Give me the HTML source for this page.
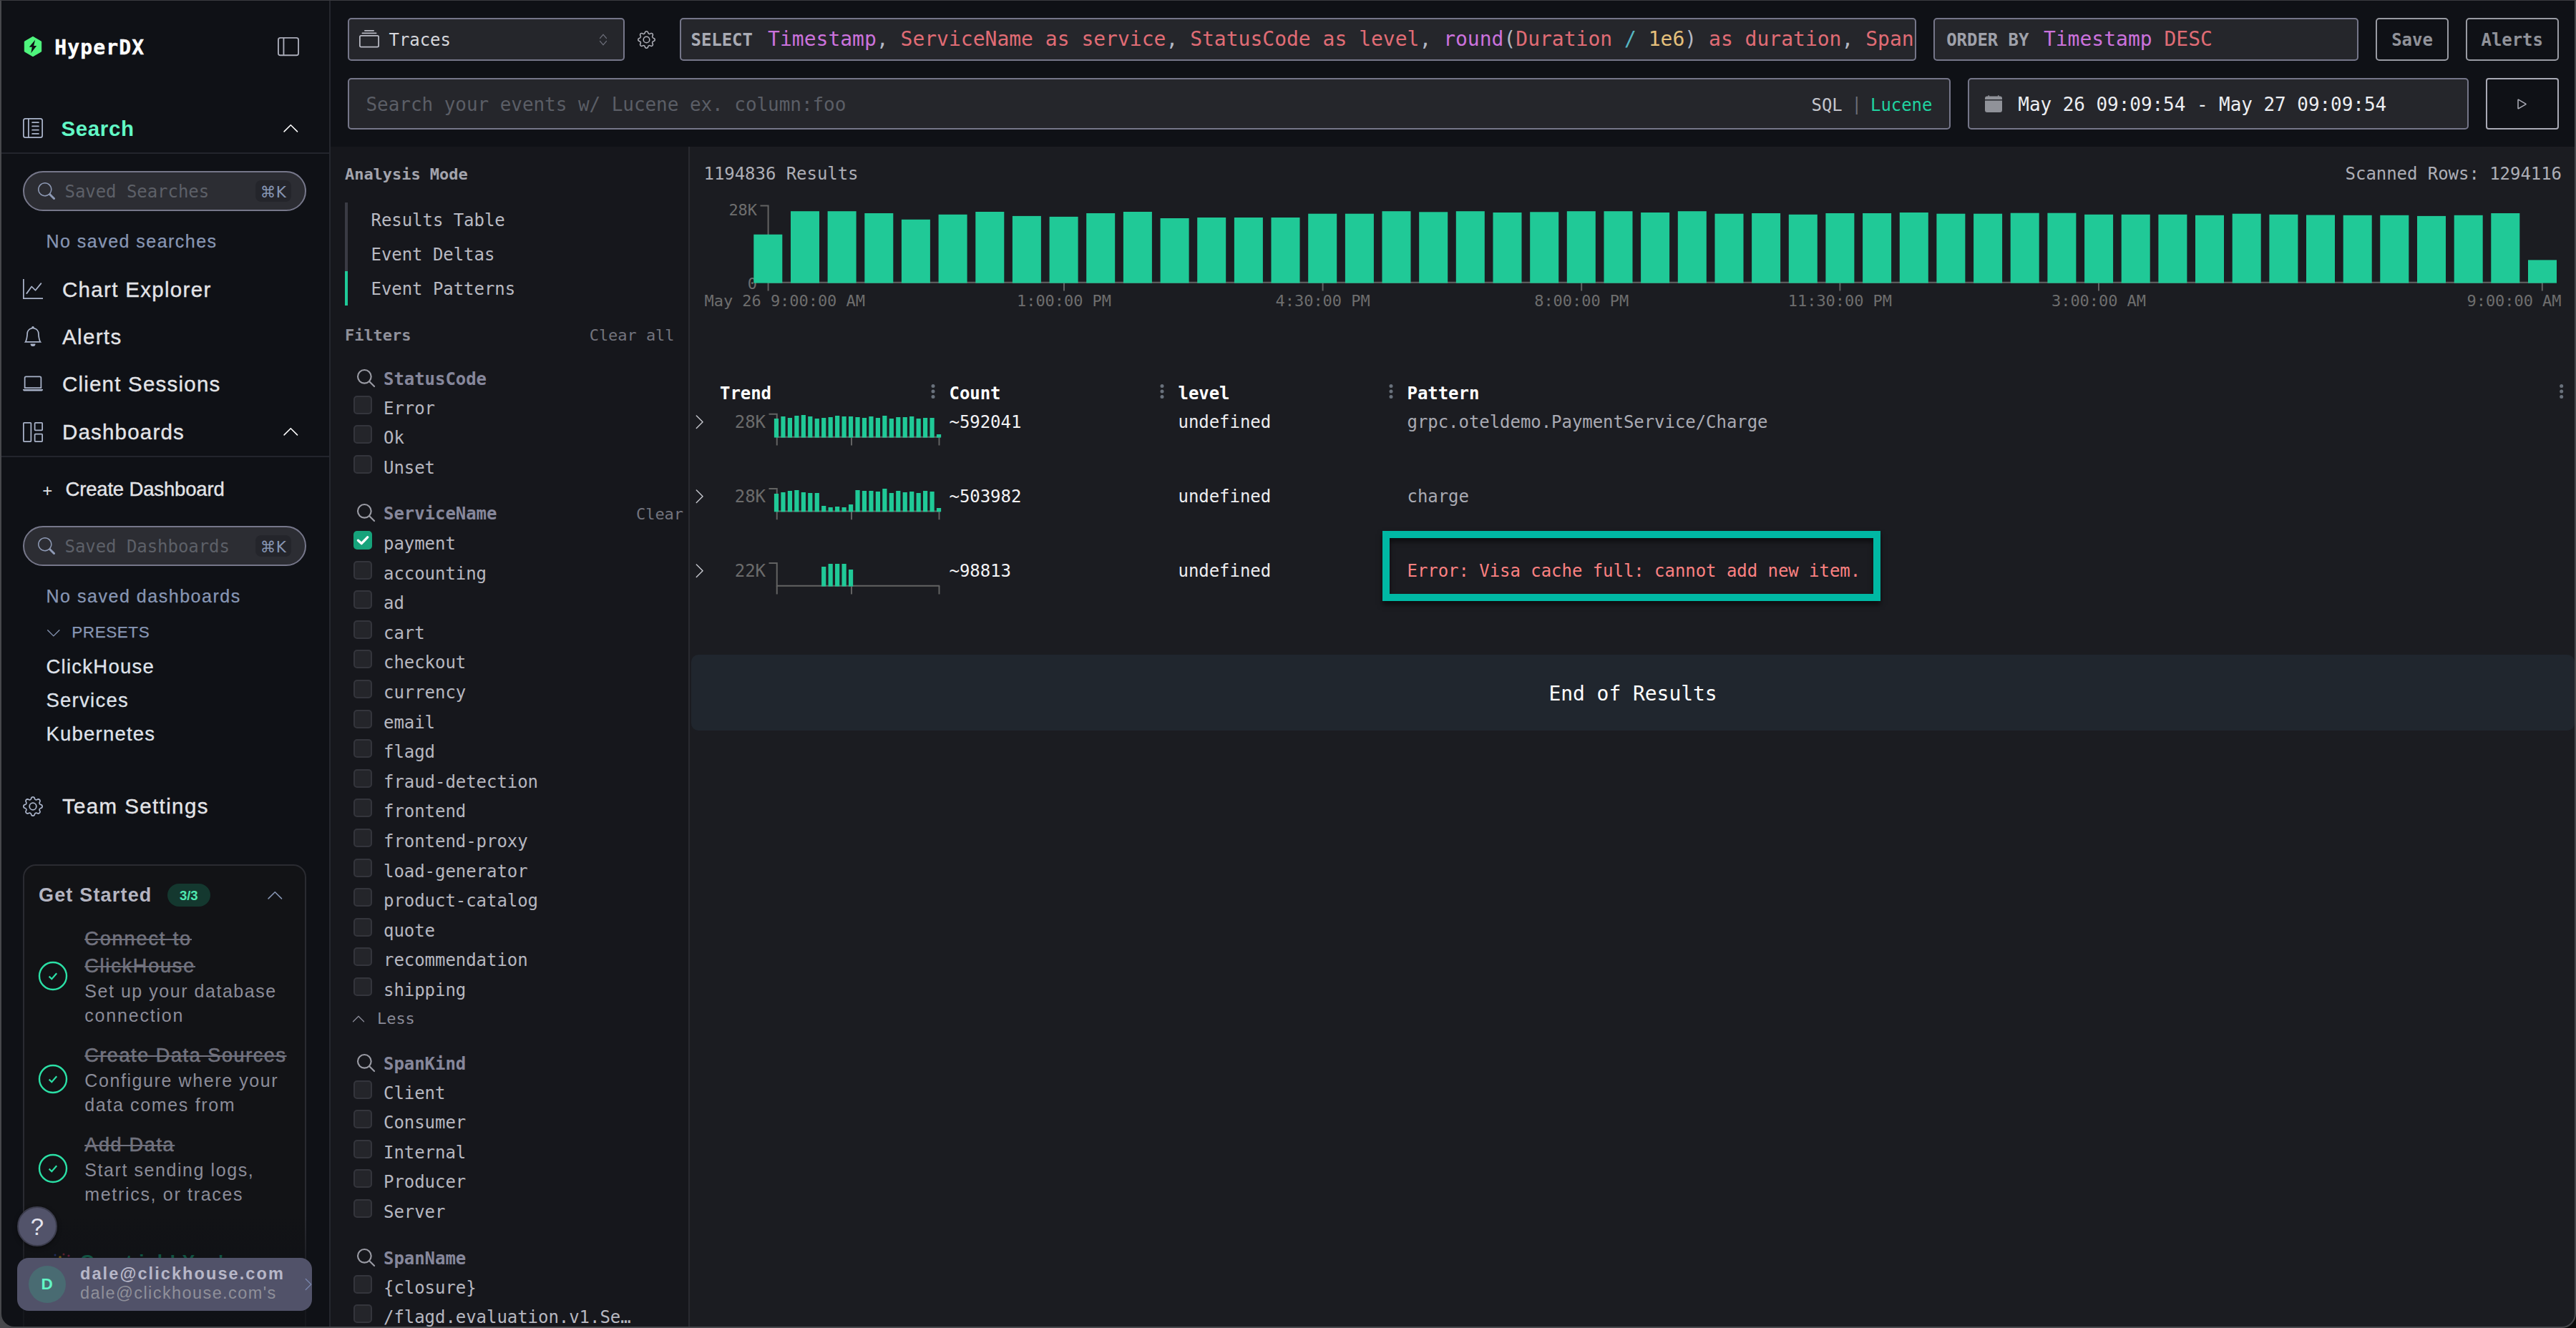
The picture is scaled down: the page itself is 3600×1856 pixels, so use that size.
<!DOCTYPE html>
<html lang="en"><head><meta charset="utf-8"><title>HyperDX - Search</title>
<style>
html,body{margin:0;padding:0;background:#1b1c21;}
body{width:3600px;height:1856px;position:relative;overflow:hidden;}
.t{position:absolute;white-space:pre;height:0;line-height:0;}
.m{font-family:'DejaVu Sans Mono','Liberation Mono',monospace;}
.s{font-family:'Liberation Sans','DejaVu Sans',sans-serif;}
.kw{color:#cb72dc}.id{color:#e06c75}.pu{color:#b3b8c4}.nu{color:#e5c07b}.op{color:#56b6c2}
</style></head>
<body>
<div style="position:absolute;left:964.00px;top:204.50px;width:2636.00px;height:1651.50px;box-sizing:border-box;background:#1b1c21;"></div>
<div class="t m" style="top:243.00px;font-size:24px;color:#adaeb6;letter-spacing:-0.049px;left:983.50px;">1194836 Results</div>
<div class="t m" style="top:243.00px;font-size:24px;color:#adaeb6;letter-spacing:-0.049px;right:20.00px;">Scanned Rows: 1294116</div>
<div class="t m" style="top:293.50px;font-size:22px;color:#6e6e6e;letter-spacing:-0.045px;right:2542.00px;">28K</div>
<div class="t m" style="top:396.50px;font-size:22px;color:#6e6e6e;letter-spacing:-0.045px;right:2542.00px;">0</div>
<svg style="position:absolute;left:0;top:0" width="3600" height="1856" viewBox="0 0 3600 1856"><path d="M1062.5 287.5 H1073.6 V394.8 H3553.500" fill="none" stroke="#636363" stroke-width="2"/><path d="M1073.6 394.8 V406.500" stroke="#636363" stroke-width="2"/><path d="M1487 394.8 V406.500" stroke="#636363" stroke-width="2"/><path d="M1848.6 394.8 V406.500" stroke="#636363" stroke-width="2"/><path d="M2210.2 394.8 V406.500" stroke="#636363" stroke-width="2"/><path d="M2571.4 394.8 V406.500" stroke="#636363" stroke-width="2"/><path d="M2933 394.8 V406.500" stroke="#636363" stroke-width="2"/><path d="M3552.8 394.8 V406.500" stroke="#636363" stroke-width="2"/><rect x="1053.3" y="327.7" width="40" height="67.9" fill="#20c997"/><rect x="1105.0" y="295.2" width="40" height="100.4" fill="#20c997"/><rect x="1156.6" y="295.2" width="40" height="100.4" fill="#20c997"/><rect x="1208.3" y="298.0" width="40" height="97.6" fill="#20c997"/><rect x="1259.9" y="306.8" width="40" height="88.8" fill="#20c997"/><rect x="1311.6" y="299.8" width="40" height="95.8" fill="#20c997"/><rect x="1363.3" y="296.0" width="40" height="99.6" fill="#20c997"/><rect x="1414.9" y="301.9" width="40" height="93.7" fill="#20c997"/><rect x="1466.6" y="302.9" width="40" height="92.7" fill="#20c997"/><rect x="1518.2" y="298.0" width="40" height="97.6" fill="#20c997"/><rect x="1569.9" y="296.0" width="40" height="99.6" fill="#20c997"/><rect x="1621.6" y="305.0" width="40" height="90.6" fill="#20c997"/><rect x="1673.2" y="304.0" width="40" height="91.6" fill="#20c997"/><rect x="1724.9" y="304.0" width="40" height="91.6" fill="#20c997"/><rect x="1776.5" y="304.0" width="40" height="91.6" fill="#20c997"/><rect x="1828.2" y="298.7" width="40" height="96.9" fill="#20c997"/><rect x="1879.9" y="298.7" width="40" height="96.9" fill="#20c997"/><rect x="1931.5" y="295.2" width="40" height="100.4" fill="#20c997"/><rect x="1983.2" y="296.3" width="40" height="99.3" fill="#20c997"/><rect x="2034.8" y="295.2" width="40" height="100.4" fill="#20c997"/><rect x="2086.5" y="297.0" width="40" height="98.6" fill="#20c997"/><rect x="2138.2" y="296.3" width="40" height="99.3" fill="#20c997"/><rect x="2189.8" y="295.2" width="40" height="100.4" fill="#20c997"/><rect x="2241.5" y="295.2" width="40" height="100.4" fill="#20c997"/><rect x="2293.1" y="297.0" width="40" height="98.6" fill="#20c997"/><rect x="2344.8" y="295.2" width="40" height="100.4" fill="#20c997"/><rect x="2396.5" y="298.7" width="40" height="96.9" fill="#20c997"/><rect x="2448.1" y="298.0" width="40" height="97.6" fill="#20c997"/><rect x="2499.8" y="299.8" width="40" height="95.8" fill="#20c997"/><rect x="2551.4" y="298.0" width="40" height="97.6" fill="#20c997"/><rect x="2603.1" y="298.0" width="40" height="97.6" fill="#20c997"/><rect x="2654.8" y="297.0" width="40" height="98.6" fill="#20c997"/><rect x="2706.4" y="298.7" width="40" height="96.9" fill="#20c997"/><rect x="2758.1" y="298.7" width="40" height="96.9" fill="#20c997"/><rect x="2809.7" y="297.7" width="40" height="97.9" fill="#20c997"/><rect x="2861.4" y="297.7" width="40" height="97.9" fill="#20c997"/><rect x="2913.1" y="299.8" width="40" height="95.8" fill="#20c997"/><rect x="2964.7" y="299.8" width="40" height="95.8" fill="#20c997"/><rect x="3016.4" y="299.8" width="40" height="95.8" fill="#20c997"/><rect x="3068.0" y="300.8" width="40" height="94.8" fill="#20c997"/><rect x="3119.7" y="298.7" width="40" height="96.9" fill="#20c997"/><rect x="3171.4" y="299.8" width="40" height="95.8" fill="#20c997"/><rect x="3223.0" y="300.5" width="40" height="95.1" fill="#20c997"/><rect x="3274.7" y="300.8" width="40" height="94.8" fill="#20c997"/><rect x="3326.3" y="300.8" width="40" height="94.8" fill="#20c997"/><rect x="3378.0" y="301.9" width="40" height="93.7" fill="#20c997"/><rect x="3429.7" y="300.8" width="40" height="94.8" fill="#20c997"/><rect x="3481.3" y="298.0" width="40" height="97.6" fill="#20c997"/><rect x="3533.0" y="363.4" width="40" height="32.2" fill="#20c997"/><path d="M1074.5 578.75 H1085.75 V610.75 H1313.250" fill="none" stroke="#636363" stroke-width="2"/><path d="M1085.75 610.75 V622.5" stroke="#636363" stroke-width="2"/><path d="M1190 610.75 V622.5" stroke="#636363" stroke-width="2"/><path d="M1312.5 610.75 V622.5" stroke="#636363" stroke-width="2"/><rect x="1081.90" y="585.00" width="6.200" height="26.55" fill="#20c997"/><rect x="1091.36" y="582.00" width="6.200" height="29.55" fill="#20c997"/><rect x="1100.82" y="584.00" width="6.200" height="27.55" fill="#20c997"/><rect x="1110.28" y="581.00" width="6.200" height="30.55" fill="#20c997"/><rect x="1119.74" y="580.00" width="6.200" height="31.55" fill="#20c997"/><rect x="1129.20" y="582.00" width="6.200" height="29.55" fill="#20c997"/><rect x="1138.66" y="585.00" width="6.200" height="26.55" fill="#20c997"/><rect x="1148.12" y="584.00" width="6.200" height="27.55" fill="#20c997"/><rect x="1157.58" y="583.00" width="6.200" height="28.55" fill="#20c997"/><rect x="1167.04" y="581.00" width="6.200" height="30.55" fill="#20c997"/><rect x="1176.50" y="582.00" width="6.200" height="29.55" fill="#20c997"/><rect x="1185.96" y="582.00" width="6.200" height="29.55" fill="#20c997"/><rect x="1195.42" y="583.00" width="6.200" height="28.55" fill="#20c997"/><rect x="1204.88" y="584.00" width="6.200" height="27.55" fill="#20c997"/><rect x="1214.34" y="582.00" width="6.200" height="29.55" fill="#20c997"/><rect x="1223.80" y="584.00" width="6.200" height="27.55" fill="#20c997"/><rect x="1233.26" y="581.00" width="6.200" height="30.55" fill="#20c997"/><rect x="1242.72" y="585.00" width="6.200" height="26.55" fill="#20c997"/><rect x="1252.18" y="583.00" width="6.200" height="28.55" fill="#20c997"/><rect x="1261.64" y="583.00" width="6.200" height="28.55" fill="#20c997"/><rect x="1271.10" y="582.00" width="6.200" height="29.55" fill="#20c997"/><rect x="1280.56" y="585.00" width="6.200" height="26.55" fill="#20c997"/><rect x="1290.02" y="584.00" width="6.200" height="27.55" fill="#20c997"/><rect x="1299.48" y="584.00" width="6.200" height="27.55" fill="#20c997"/><rect x="1308.94" y="607.00" width="6.200" height="4.55" fill="#20c997"/><path d="M1074.5 683 H1085.75 V714.5 H1313.250" fill="none" stroke="#636363" stroke-width="2"/><path d="M1085.75 714.5 V726.25" stroke="#636363" stroke-width="2"/><path d="M1190 714.5 V726.25" stroke="#636363" stroke-width="2"/><path d="M1312.5 714.5 V726.25" stroke="#636363" stroke-width="2"/><rect x="1081.90" y="690.00" width="6.200" height="25.30" fill="#20c997"/><rect x="1091.36" y="688.00" width="6.200" height="27.30" fill="#20c997"/><rect x="1100.82" y="686.00" width="6.200" height="29.30" fill="#20c997"/><rect x="1110.28" y="685.00" width="6.200" height="30.30" fill="#20c997"/><rect x="1119.74" y="688.00" width="6.200" height="27.30" fill="#20c997"/><rect x="1129.20" y="689.00" width="6.200" height="26.30" fill="#20c997"/><rect x="1138.66" y="689.00" width="6.200" height="26.30" fill="#20c997"/><rect x="1148.12" y="707.00" width="6.200" height="8.30" fill="#20c997"/><rect x="1157.58" y="709.00" width="6.200" height="6.30" fill="#20c997"/><rect x="1167.04" y="708.00" width="6.200" height="7.30" fill="#20c997"/><rect x="1176.50" y="709.00" width="6.200" height="6.30" fill="#20c997"/><rect x="1185.96" y="705.00" width="6.200" height="10.30" fill="#20c997"/><rect x="1195.42" y="685.00" width="6.200" height="30.30" fill="#20c997"/><rect x="1204.88" y="686.00" width="6.200" height="29.30" fill="#20c997"/><rect x="1214.34" y="686.00" width="6.200" height="29.30" fill="#20c997"/><rect x="1223.80" y="687.00" width="6.200" height="28.30" fill="#20c997"/><rect x="1233.26" y="683.00" width="6.200" height="32.30" fill="#20c997"/><rect x="1242.72" y="689.00" width="6.200" height="26.30" fill="#20c997"/><rect x="1252.18" y="686.00" width="6.200" height="29.30" fill="#20c997"/><rect x="1261.64" y="688.00" width="6.200" height="27.30" fill="#20c997"/><rect x="1271.10" y="687.00" width="6.200" height="28.30" fill="#20c997"/><rect x="1280.56" y="689.00" width="6.200" height="26.30" fill="#20c997"/><rect x="1290.02" y="686.00" width="6.200" height="29.30" fill="#20c997"/><rect x="1299.48" y="687.00" width="6.200" height="28.30" fill="#20c997"/><rect x="1308.94" y="710.00" width="6.200" height="5.30" fill="#20c997"/><path d="M1074.5 787 H1085.75 V818.75 H1313.250" fill="none" stroke="#636363" stroke-width="2"/><path d="M1085.75 818.75 V830.5" stroke="#636363" stroke-width="2"/><path d="M1190 818.75 V830.5" stroke="#636363" stroke-width="2"/><path d="M1312.5 818.75 V830.5" stroke="#636363" stroke-width="2"/><rect x="1148.12" y="792.00" width="6.200" height="27.55" fill="#20c997"/><rect x="1157.58" y="788.00" width="6.200" height="31.55" fill="#20c997"/><rect x="1167.04" y="788.00" width="6.200" height="31.55" fill="#20c997"/><rect x="1176.50" y="788.00" width="6.200" height="31.55" fill="#20c997"/><rect x="1185.96" y="796.00" width="6.200" height="23.55" fill="#20c997"/><circle cx="1304" cy="539.5" r="2.500" fill="#69717c"/><circle cx="1304" cy="547" r="2.500" fill="#69717c"/><circle cx="1304" cy="554.5" r="2.500" fill="#69717c"/><circle cx="1624" cy="539.5" r="2.500" fill="#69717c"/><circle cx="1624" cy="547" r="2.500" fill="#69717c"/><circle cx="1624" cy="554.5" r="2.500" fill="#69717c"/><circle cx="1944" cy="539.5" r="2.500" fill="#69717c"/><circle cx="1944" cy="547" r="2.500" fill="#69717c"/><circle cx="1944" cy="554.5" r="2.500" fill="#69717c"/><circle cx="3579.7" cy="539.5" r="2.500" fill="#69717c"/><circle cx="3579.7" cy="547" r="2.500" fill="#69717c"/><circle cx="3579.7" cy="554.5" r="2.500" fill="#69717c"/></svg>
<div class="t m" style="top:420.50px;font-size:22px;color:#6e6e6e;letter-spacing:-0.045px;left:984.50px;">May 26 9:00:00 AM</div>
<div class="t m" style="top:420.50px;font-size:22px;color:#6e6e6e;letter-spacing:-0.045px;left:1487.00px;transform:translateX(-50%);">1:00:00 PM</div>
<div class="t m" style="top:420.50px;font-size:22px;color:#6e6e6e;letter-spacing:-0.045px;left:1848.60px;transform:translateX(-50%);">4:30:00 PM</div>
<div class="t m" style="top:420.50px;font-size:22px;color:#6e6e6e;letter-spacing:-0.045px;left:2210.20px;transform:translateX(-50%);">8:00:00 PM</div>
<div class="t m" style="top:420.50px;font-size:22px;color:#6e6e6e;letter-spacing:-0.045px;left:2571.40px;transform:translateX(-50%);">11:30:00 PM</div>
<div class="t m" style="top:420.50px;font-size:22px;color:#6e6e6e;letter-spacing:-0.045px;left:2933.00px;transform:translateX(-50%);">3:00:00 AM</div>
<div class="t m" style="top:420.50px;font-size:22px;color:#6e6e6e;letter-spacing:-0.045px;right:20.50px;">9:00:00 AM</div>
<div class="t m" style="top:550.00px;font-size:24px;color:#ffffff;font-weight:700;letter-spacing:-0.049px;left:1006.00px;">Trend</div>
<div class="t m" style="top:550.00px;font-size:24px;color:#ffffff;font-weight:700;letter-spacing:-0.049px;left:1326.50px;">Count</div>
<div class="t m" style="top:550.00px;font-size:24px;color:#ffffff;font-weight:700;letter-spacing:-0.049px;left:1646.50px;">level</div>
<div class="t m" style="top:550.00px;font-size:24px;color:#ffffff;font-weight:700;letter-spacing:-0.049px;left:1966.50px;">Pattern</div>
<svg style="position:absolute;left:966.40px;top:577.70px;color:#c4c5cc;" width="23.40" height="23.40" viewBox="0 0 16 16" fill="currentColor" preserveAspectRatio="none"><path fill-rule="evenodd" d="M4.646 1.646a.5.5 0 0 1 .708 0l6 6a.5.5 0 0 1 0 .708l-6 6a.5.5 0 0 1-.708-.708L10.293 8 4.646 2.354a.5.5 0 0 1 0-.708"/></svg>
<div class="t m" style="top:590.00px;font-size:24px;color:#6b6b6b;letter-spacing:-0.049px;right:2530.00px;">28K</div>
<div class="t m" style="top:590.00px;font-size:24px;color:#f3f3f5;letter-spacing:-0.049px;left:1326.50px;">~592041</div>
<div class="t m" style="top:590.00px;font-size:24px;color:#ededf0;letter-spacing:-0.049px;left:1646.50px;">undefined</div>
<div class="t m" style="top:590.00px;font-size:24px;color:#a9aab3;letter-spacing:-0.049px;left:1966.50px;">grpc.oteldemo.PaymentService/Charge</div>
<svg style="position:absolute;left:966.40px;top:681.70px;color:#c4c5cc;" width="23.40" height="23.40" viewBox="0 0 16 16" fill="currentColor" preserveAspectRatio="none"><path fill-rule="evenodd" d="M4.646 1.646a.5.5 0 0 1 .708 0l6 6a.5.5 0 0 1 0 .708l-6 6a.5.5 0 0 1-.708-.708L10.293 8 4.646 2.354a.5.5 0 0 1 0-.708"/></svg>
<div class="t m" style="top:694.00px;font-size:24px;color:#6b6b6b;letter-spacing:-0.049px;right:2530.00px;">28K</div>
<div class="t m" style="top:694.00px;font-size:24px;color:#f3f3f5;letter-spacing:-0.049px;left:1326.50px;">~503982</div>
<div class="t m" style="top:694.00px;font-size:24px;color:#ededf0;letter-spacing:-0.049px;left:1646.50px;">undefined</div>
<div class="t m" style="top:694.00px;font-size:24px;color:#a9aab3;letter-spacing:-0.049px;left:1966.50px;">charge</div>
<svg style="position:absolute;left:966.40px;top:785.55px;color:#c4c5cc;" width="23.40" height="23.40" viewBox="0 0 16 16" fill="currentColor" preserveAspectRatio="none"><path fill-rule="evenodd" d="M4.646 1.646a.5.5 0 0 1 .708 0l6 6a.5.5 0 0 1 0 .708l-6 6a.5.5 0 0 1-.708-.708L10.293 8 4.646 2.354a.5.5 0 0 1 0-.708"/></svg>
<div class="t m" style="top:798.00px;font-size:24px;color:#6b6b6b;letter-spacing:-0.049px;right:2530.00px;">22K</div>
<div class="t m" style="top:798.00px;font-size:24px;color:#f3f3f5;letter-spacing:-0.049px;left:1326.50px;">~98813</div>
<div class="t m" style="top:798.00px;font-size:24px;color:#ededf0;letter-spacing:-0.049px;left:1646.50px;">undefined</div>
<div class="t m" style="top:798.00px;font-size:24px;color:#fb8181;letter-spacing:-0.049px;left:1966.50px;">Error: Visa cache full: cannot add new item.</div>
<div style="position:absolute;left:1932.00px;top:742.00px;width:695.70px;height:98.00px;box-sizing:border-box;border:10px solid #00b8a4;box-shadow:0 5px 7px rgba(0,0,0,.55), inset 0 5px 7px rgba(0,0,0,.55);"></div>
<div style="position:absolute;left:966.00px;top:914.50px;width:2632.00px;height:106.25px;box-sizing:border-box;background:#20262e;border-radius:10px;"></div>
<div class="t m" style="top:969.50px;font-size:28px;color:#ffffff;letter-spacing:-0.057px;left:2282.00px;transform:translateX(-50%);">End of Results</div>
<div style="position:absolute;left:461.00px;top:204.50px;width:501.00px;height:1651.50px;box-sizing:border-box;background:#16171c;"></div>
<div style="position:absolute;left:962.00px;top:204.50px;width:2.00px;height:1651.50px;box-sizing:border-box;background:#292a30;"></div>
<div class="t m" style="top:243.50px;font-size:22px;color:#a3a4ad;font-weight:700;letter-spacing:-0.045px;left:482.00px;">Analysis Mode</div>
<div style="position:absolute;left:482.00px;top:283.00px;width:4.00px;height:144.00px;box-sizing:border-box;background:#3a3b44;"></div>
<div style="position:absolute;left:482.00px;top:379.00px;width:4.00px;height:48.00px;box-sizing:border-box;background:#1fc998;"></div>
<div class="t m" style="top:308.00px;font-size:24px;color:#b9bac2;letter-spacing:-0.049px;left:518.50px;">Results Table</div>
<div class="t m" style="top:356.00px;font-size:24px;color:#b9bac2;letter-spacing:-0.049px;left:518.50px;">Event Deltas</div>
<div class="t m" style="top:404.00px;font-size:24px;color:#b9bac2;letter-spacing:-0.049px;left:518.50px;">Event Patterns</div>
<div class="t m" style="top:468.50px;font-size:22px;color:#90919b;font-weight:700;letter-spacing:-0.045px;left:482.00px;">Filters</div>
<div class="t m" style="top:468.50px;font-size:22px;color:#73747e;letter-spacing:-0.045px;right:2657.50px;">Clear all</div>
<svg style="position:absolute;left:495.6px;top:512.70px" width="32" height="32" viewBox="0 0 24 24" fill="none" stroke="#9a9ba4" stroke-width="1.600" stroke-linecap="round"><circle cx="10" cy="10" r="7"/><path d="M20.300 20.300 L15 15"/></svg>
<div class="t m" style="top:530.00px;font-size:24px;color:#86879b;font-weight:700;letter-spacing:-0.049px;left:536.00px;">StatusCode</div>
<div style="position:absolute;left:494.00px;top:553.00px;width:26.00px;height:26.00px;box-sizing:border-box;background:#24252a;border:2px solid #34353c;border-radius:5px;"></div>
<div class="t m" style="top:571.00px;font-size:24px;color:#b6b7c0;letter-spacing:-0.049px;left:536.00px;">Error</div>
<div style="position:absolute;left:494.00px;top:594.00px;width:26.00px;height:26.00px;box-sizing:border-box;background:#24252a;border:2px solid #34353c;border-radius:5px;"></div>
<div class="t m" style="top:612.00px;font-size:24px;color:#b6b7c0;letter-spacing:-0.049px;left:536.00px;">Ok</div>
<div style="position:absolute;left:494.00px;top:636.00px;width:26.00px;height:26.00px;box-sizing:border-box;background:#24252a;border:2px solid #34353c;border-radius:5px;"></div>
<div class="t m" style="top:654.00px;font-size:24px;color:#b6b7c0;letter-spacing:-0.049px;left:536.00px;">Unset</div>
<svg style="position:absolute;left:495.6px;top:701.45px" width="32" height="32" viewBox="0 0 24 24" fill="none" stroke="#9a9ba4" stroke-width="1.600" stroke-linecap="round"><circle cx="10" cy="10" r="7"/><path d="M20.300 20.300 L15 15"/></svg>
<div class="t m" style="top:718.00px;font-size:24px;color:#86879b;font-weight:700;letter-spacing:-0.049px;left:536.00px;">ServiceName</div>
<div class="t m" style="top:718.50px;font-size:22px;color:#73747e;letter-spacing:-0.045px;right:2645.00px;">Clear</div>
<div style="position:absolute;left:494.00px;top:742.00px;width:26.00px;height:26.00px;box-sizing:border-box;background:#16a37b;border-radius:5px;"></div>
<svg style="position:absolute;left:494px;top:742.00px" width="26" height="26" viewBox="0 0 26 26"><path d="M6.500 13.200 L11.200 17.600 L19.600 8.800" fill="none" stroke="#fff" stroke-width="3.400" stroke-linecap="round" stroke-linejoin="round"/></svg>
<div class="t m" style="top:760.00px;font-size:24px;color:#b6b7c0;letter-spacing:-0.049px;left:536.00px;">payment</div>
<div style="position:absolute;left:494.00px;top:784.00px;width:26.00px;height:26.00px;box-sizing:border-box;background:#24252a;border:2px solid #34353c;border-radius:5px;"></div>
<div class="t m" style="top:802.00px;font-size:24px;color:#b6b7c0;letter-spacing:-0.049px;left:536.00px;">accounting</div>
<div style="position:absolute;left:494.00px;top:825.00px;width:26.00px;height:26.00px;box-sizing:border-box;background:#24252a;border:2px solid #34353c;border-radius:5px;"></div>
<div class="t m" style="top:843.00px;font-size:24px;color:#b6b7c0;letter-spacing:-0.049px;left:536.00px;">ad</div>
<div style="position:absolute;left:494.00px;top:867.00px;width:26.00px;height:26.00px;box-sizing:border-box;background:#24252a;border:2px solid #34353c;border-radius:5px;"></div>
<div class="t m" style="top:885.00px;font-size:24px;color:#b6b7c0;letter-spacing:-0.049px;left:536.00px;">cart</div>
<div style="position:absolute;left:494.00px;top:908.00px;width:26.00px;height:26.00px;box-sizing:border-box;background:#24252a;border:2px solid #34353c;border-radius:5px;"></div>
<div class="t m" style="top:926.00px;font-size:24px;color:#b6b7c0;letter-spacing:-0.049px;left:536.00px;">checkout</div>
<div style="position:absolute;left:494.00px;top:950.00px;width:26.00px;height:26.00px;box-sizing:border-box;background:#24252a;border:2px solid #34353c;border-radius:5px;"></div>
<div class="t m" style="top:968.00px;font-size:24px;color:#b6b7c0;letter-spacing:-0.049px;left:536.00px;">currency</div>
<div style="position:absolute;left:494.00px;top:992.00px;width:26.00px;height:26.00px;box-sizing:border-box;background:#24252a;border:2px solid #34353c;border-radius:5px;"></div>
<div class="t m" style="top:1010.00px;font-size:24px;color:#b6b7c0;letter-spacing:-0.049px;left:536.00px;">email</div>
<div style="position:absolute;left:494.00px;top:1033.00px;width:26.00px;height:26.00px;box-sizing:border-box;background:#24252a;border:2px solid #34353c;border-radius:5px;"></div>
<div class="t m" style="top:1051.00px;font-size:24px;color:#b6b7c0;letter-spacing:-0.049px;left:536.00px;">flagd</div>
<div style="position:absolute;left:494.00px;top:1075.00px;width:26.00px;height:26.00px;box-sizing:border-box;background:#24252a;border:2px solid #34353c;border-radius:5px;"></div>
<div class="t m" style="top:1093.00px;font-size:24px;color:#b6b7c0;letter-spacing:-0.049px;left:536.00px;">fraud-detection</div>
<div style="position:absolute;left:494.00px;top:1116.00px;width:26.00px;height:26.00px;box-sizing:border-box;background:#24252a;border:2px solid #34353c;border-radius:5px;"></div>
<div class="t m" style="top:1134.00px;font-size:24px;color:#b6b7c0;letter-spacing:-0.049px;left:536.00px;">frontend</div>
<div style="position:absolute;left:494.00px;top:1158.00px;width:26.00px;height:26.00px;box-sizing:border-box;background:#24252a;border:2px solid #34353c;border-radius:5px;"></div>
<div class="t m" style="top:1176.00px;font-size:24px;color:#b6b7c0;letter-spacing:-0.049px;left:536.00px;">frontend-proxy</div>
<div style="position:absolute;left:494.00px;top:1200.00px;width:26.00px;height:26.00px;box-sizing:border-box;background:#24252a;border:2px solid #34353c;border-radius:5px;"></div>
<div class="t m" style="top:1218.00px;font-size:24px;color:#b6b7c0;letter-spacing:-0.049px;left:536.00px;">load-generator</div>
<div style="position:absolute;left:494.00px;top:1241.00px;width:26.00px;height:26.00px;box-sizing:border-box;background:#24252a;border:2px solid #34353c;border-radius:5px;"></div>
<div class="t m" style="top:1259.00px;font-size:24px;color:#b6b7c0;letter-spacing:-0.049px;left:536.00px;">product-catalog</div>
<div style="position:absolute;left:494.00px;top:1283.00px;width:26.00px;height:26.00px;box-sizing:border-box;background:#24252a;border:2px solid #34353c;border-radius:5px;"></div>
<div class="t m" style="top:1301.00px;font-size:24px;color:#b6b7c0;letter-spacing:-0.049px;left:536.00px;">quote</div>
<div style="position:absolute;left:494.00px;top:1324.00px;width:26.00px;height:26.00px;box-sizing:border-box;background:#24252a;border:2px solid #34353c;border-radius:5px;"></div>
<div class="t m" style="top:1342.00px;font-size:24px;color:#b6b7c0;letter-spacing:-0.049px;left:536.00px;">recommendation</div>
<div style="position:absolute;left:494.00px;top:1366.00px;width:26.00px;height:26.00px;box-sizing:border-box;background:#24252a;border:2px solid #34353c;border-radius:5px;"></div>
<div class="t m" style="top:1384.00px;font-size:24px;color:#b6b7c0;letter-spacing:-0.049px;left:536.00px;">shipping</div>
<svg style="position:absolute;left:491.00px;top:1413.50px;color:#8a8b98;" width="20.00" height="20.00" viewBox="0 0 16 16" fill="currentColor" preserveAspectRatio="none"><path fill-rule="evenodd" d="M7.646 4.646a.5.5 0 0 1 .708 0l6 6a.5.5 0 0 1-.708.708L8 5.707l-5.646 5.647a.5.5 0 0 1-.708-.708z"/></svg>
<div class="t m" style="top:1423.50px;font-size:22px;color:#8a8b98;letter-spacing:-0.045px;left:527.00px;">Less</div>
<svg style="position:absolute;left:495.6px;top:1470.20px" width="32" height="32" viewBox="0 0 24 24" fill="none" stroke="#9a9ba4" stroke-width="1.600" stroke-linecap="round"><circle cx="10" cy="10" r="7"/><path d="M20.300 20.300 L15 15"/></svg>
<div class="t m" style="top:1487.00px;font-size:24px;color:#86879b;font-weight:700;letter-spacing:-0.049px;left:536.00px;">SpanKind</div>
<div style="position:absolute;left:494.00px;top:1510.00px;width:26.00px;height:26.00px;box-sizing:border-box;background:#24252a;border:2px solid #34353c;border-radius:5px;"></div>
<div class="t m" style="top:1528.00px;font-size:24px;color:#b6b7c0;letter-spacing:-0.049px;left:536.00px;">Client</div>
<div style="position:absolute;left:494.00px;top:1551.00px;width:26.00px;height:26.00px;box-sizing:border-box;background:#24252a;border:2px solid #34353c;border-radius:5px;"></div>
<div class="t m" style="top:1569.00px;font-size:24px;color:#b6b7c0;letter-spacing:-0.049px;left:536.00px;">Consumer</div>
<div style="position:absolute;left:494.00px;top:1593.00px;width:26.00px;height:26.00px;box-sizing:border-box;background:#24252a;border:2px solid #34353c;border-radius:5px;"></div>
<div class="t m" style="top:1611.00px;font-size:24px;color:#b6b7c0;letter-spacing:-0.049px;left:536.00px;">Internal</div>
<div style="position:absolute;left:494.00px;top:1634.00px;width:26.00px;height:26.00px;box-sizing:border-box;background:#24252a;border:2px solid #34353c;border-radius:5px;"></div>
<div class="t m" style="top:1652.00px;font-size:24px;color:#b6b7c0;letter-spacing:-0.049px;left:536.00px;">Producer</div>
<div style="position:absolute;left:494.00px;top:1676.00px;width:26.00px;height:26.00px;box-sizing:border-box;background:#24252a;border:2px solid #34353c;border-radius:5px;"></div>
<div class="t m" style="top:1694.00px;font-size:24px;color:#b6b7c0;letter-spacing:-0.049px;left:536.00px;">Server</div>
<svg style="position:absolute;left:495.6px;top:1742.20px" width="32" height="32" viewBox="0 0 24 24" fill="none" stroke="#9a9ba4" stroke-width="1.600" stroke-linecap="round"><circle cx="10" cy="10" r="7"/><path d="M20.300 20.300 L15 15"/></svg>
<div class="t m" style="top:1759.00px;font-size:24px;color:#86879b;font-weight:700;letter-spacing:-0.049px;left:536.00px;">SpanName</div>
<div style="position:absolute;left:494.00px;top:1782.00px;width:26.00px;height:26.00px;box-sizing:border-box;background:#24252a;border:2px solid #34353c;border-radius:5px;"></div>
<div class="t m" style="top:1800.00px;font-size:24px;color:#b6b7c0;letter-spacing:-0.049px;left:536.00px;">{closure}</div>
<div style="position:absolute;left:494.00px;top:1823.00px;width:26.00px;height:26.00px;box-sizing:border-box;background:#24252a;border:2px solid #34353c;border-radius:5px;"></div>
<div class="t m" style="top:1841.00px;font-size:24px;color:#b6b7c0;letter-spacing:-0.049px;left:536.00px;">/flagd.evaluation.v1.Se…</div>
<div style="position:absolute;left:461.00px;top:0.00px;width:3139.00px;height:204.50px;box-sizing:border-box;background:#0f1116;"></div>
<div style="position:absolute;left:486.00px;top:25.00px;width:387.00px;height:59.50px;box-sizing:border-box;background:#25262b;border:2px solid #757689;border-radius:5px;"></div>
<svg style="position:absolute;left:502.00px;top:40.50px;color:#b9bac4;" width="28.00" height="28.00" viewBox="0 0 16 16" fill="currentColor" preserveAspectRatio="none"><path d="M2.5 3.5a.5.5 0 0 1 0-1h11a.5.5 0 0 1 0 1zm2-2a.5.5 0 0 1 0-1h7a.5.5 0 0 1 0 1zM0 13a1.500 1.500 0 0 0 1.500 1.500h13A1.500 1.500 0 0 0 16 13V6a1.500 1.500 0 0 0-1.500-1.500h-13A1.500 1.500 0 0 0 0 6zm1.500.5A.5.5 0 0 1 1 13V6a.5.5 0 0 1 .5-.5h13a.5.5 0 0 1 .5.5v7a.5.5 0 0 1-.5.5z"/></svg>
<div class="t m" style="top:56.00px;font-size:24px;color:#d6d7dc;letter-spacing:-0.049px;left:543.50px;">Traces</div>
<svg style="position:absolute;left:834.00px;top:45.00px;color:#6b6d78;" width="18.00" height="21.00" viewBox="0 0 16 16" fill="currentColor" preserveAspectRatio="none"><path fill-rule="evenodd" d="M3.646 9.146a.5.5 0 0 1 .708 0L8 12.793l3.646-3.647a.5.5 0 0 1 .708.708l-4 4a.5.5 0 0 1-.708 0l-4-4a.5.5 0 0 1 0-.708m0-2.292a.5.5 0 0 0 .708 0L8 3.207l3.646 3.647a.5.5 0 0 0 .708-.708l-4-4a.5.5 0 0 0-.708 0l-4 4a.5.5 0 0 0 0 .708"/></svg>
<svg style="position:absolute;left:890.50px;top:43.00px;color:#aeafb8;" width="25.00" height="25.00" viewBox="0 0 16 16" fill="currentColor" preserveAspectRatio="none"><path d="M8 4.754a3.246 3.246 0 1 0 0 6.492 3.246 3.246 0 0 0 0-6.492M5.754 8a2.246 2.246 0 1 1 4.492 0 2.246 2.246 0 0 1-4.492 0"/><path d="M9.796 1.343c-.527-1.79-3.065-1.79-3.592 0l-.094.319a.873.873 0 0 1-1.255.52l-.292-.16c-1.64-.892-3.433.902-2.54 2.541l.159.292a.873.873 0 0 1-.52 1.255l-.319.094c-1.79.527-1.79 3.065 0 3.592l.319.094a.873.873 0 0 1 .52 1.255l-.16.292c-.892 1.64.901 3.434 2.541 2.54l.292-.159a.873.873 0 0 1 1.255.52l.094.319c.527 1.79 3.065 1.79 3.592 0l.094-.319a.873.873 0 0 1 1.255-.52l.292.16c1.64.893 3.434-.902 2.54-2.541l-.159-.292a.873.873 0 0 1 .52-1.255l.319-.094c1.79-.527 1.79-3.065 0-3.592l-.319-.094a.873.873 0 0 1-.52-1.255l.16-.292c.893-1.64-.902-3.433-2.541-2.54l-.292.159a.873.873 0 0 1-1.255-.52zm-2.633.283c.246-.835 1.428-.835 1.674 0l.094.319a1.873 1.873 0 0 0 2.693 1.115l.291-.16c.764-.415 1.6.42 1.184 1.185l-.159.292a1.873 1.873 0 0 0 1.116 2.692l.318.094c.835.246.835 1.428 0 1.674l-.319.094a1.873 1.873 0 0 0-1.115 2.693l.16.291c.415.764-.42 1.6-1.185 1.184l-.291-.159a1.873 1.873 0 0 0-2.693 1.116l-.094.318c-.246.835-1.428.835-1.674 0l-.094-.319a1.873 1.873 0 0 0-2.692-1.115l-.292.16c-.764.415-1.6-.42-1.184-1.185l.159-.291A1.873 1.873 0 0 0 1.945 8.93l-.319-.094c-.835-.246-.835-1.428 0-1.674l.319-.094A1.873 1.873 0 0 0 3.06 4.377l-.16-.292c-.415-.764.42-1.6 1.185-1.184l.292.159a1.873 1.873 0 0 0 2.692-1.115z"/></svg>
<div style="position:absolute;left:949.50px;top:25.00px;width:1728.10px;height:59.50px;box-sizing:border-box;background:#25262b;border:2px solid #757689;border-radius:5px;overflow:hidden;"><div class="t m" style="width:1710px;clip-path:inset(-40px 0 -40px 0);left:14px;top:27.56px;font-size:28px;letter-spacing:0"><span style="font-size:24px;font-weight:700;color:#a9abb4;letter-spacing:-0.050px">SELECT</span><span style="display:inline-block;width:21.200px"></span><span class="kw">Timestamp</span><span class="pu">, </span><span class="id">ServiceName as service</span><span class="pu">, </span><span class="id">StatusCode as level</span><span class="pu">, </span><span class="kw">round</span><span class="pu">(</span><span class="id">Duration </span><span class="op">/</span><span class="id"> </span><span class="nu">1e6</span><span class="pu">)</span><span class="id"> as duration</span><span class="pu">, </span><span class="id">SpanName</span></div></div>
<div style="position:absolute;left:2701.70px;top:25.00px;width:594.00px;height:59.50px;box-sizing:border-box;background:#25262b;border:2px solid #757689;border-radius:5px;overflow:hidden;"><div class="t m" style="left:16.500px;top:27.56px;font-size:28px;letter-spacing:0"><span style="font-size:24px;font-weight:700;color:#9fa1aa;letter-spacing:-0.050px">ORDER BY</span><span style="display:inline-block;width:20.500px"></span><span class="kw">Timestamp</span><span class="id"> DESC</span></div></div>
<div style="position:absolute;left:3320.00px;top:25.00px;width:102.00px;height:59.50px;box-sizing:border-box;border:2px solid #999ba3;border-radius:5px;"></div>
<div class="t m" style="top:56.00px;font-size:24px;color:#909299;font-weight:700;letter-spacing:-0.049px;left:3371.00px;transform:translateX(-50%);">Save</div>
<div style="position:absolute;left:3446.00px;top:25.00px;width:129.50px;height:59.50px;box-sizing:border-box;border:2px solid #999ba3;border-radius:5px;"></div>
<div class="t m" style="top:56.00px;font-size:24px;color:#909299;font-weight:700;letter-spacing:-0.049px;left:3510.70px;transform:translateX(-50%);">Alerts</div>
<div style="position:absolute;left:486.00px;top:109.25px;width:2239.50px;height:71.50px;box-sizing:border-box;background:#25262b;border:2px solid #757689;border-radius:5px;"></div>
<div class="t m" style="top:146.00px;font-size:26px;color:#5b5e66;letter-spacing:-0.053px;left:511.50px;">Search your events w/ Lucene ex. column:foo</div>
<div class="t m" style="top:147.00px;font-size:24px;color:#c4c5cc;letter-spacing:-0.049px;left:2531.50px;">SQL</div>
<div class="t m" style="top:146.00px;font-size:24px;color:#6b6d78;letter-spacing:-0.049px;left:2587.50px;">|</div>
<div class="t m" style="top:147.00px;font-size:24px;color:#20d3a0;letter-spacing:-0.049px;left:2614.00px;">Lucene</div>
<div style="position:absolute;left:2750.00px;top:109.25px;width:699.80px;height:71.50px;box-sizing:border-box;background:#25262b;border:2px solid #757689;border-radius:5px;"></div>
<svg style="position:absolute;left:2774.00px;top:133.00px;color:#909299;" width="24.00" height="24.00" viewBox="0 0 16 16" fill="currentColor" preserveAspectRatio="none"><path d="M3.500 0a.5.5 0 0 1 .5.5V1h8V.5a.5.5 0 0 1 1 0V1h1a2 2 0 0 1 2 2v11a2 2 0 0 1-2 2H2a2 2 0 0 1-2-2V5h16V4H0V3a2 2 0 0 1 2-2h1V.5a.5.5 0 0 1 .5-.5"/></svg>
<div class="t m" style="top:146.00px;font-size:26px;color:#eceef2;letter-spacing:-0.053px;left:2820.30px;">May 26 09:09:54 - May 27 09:09:54</div>
<div style="position:absolute;left:3474.00px;top:109.25px;width:101.50px;height:71.50px;box-sizing:border-box;border:2px solid #a9aab5;border-radius:4px;"></div>
<svg style="position:absolute;left:3512.20px;top:132.50px;color:#a9aab5;" width="25.00" height="25.00" viewBox="0 0 16 16" fill="currentColor" preserveAspectRatio="none"><path d="M10.804 8 5 4.633v6.734zm.792-.696a.802.802 0 0 1 0 1.392l-6.363 3.692C4.713 12.690 4 12.345 4 11.692V4.308c0-.653.713-.998 1.233-.696z"/></svg>
<div style="position:absolute;left:0.00px;top:0.00px;width:461.00px;height:1856.00px;box-sizing:border-box;background:#0f1116;"></div>
<svg style="position:absolute;left:30px;top:48px" width="32" height="34" viewBox="30 48 32 34"><path d="M46 51.300 L57.700 58.100 V72 L46 78.800 L34.300 72 V58.100 Z" fill="#4ff57d" stroke="#4ff57d" stroke-width="1" stroke-linejoin="round"/><path d="M49.100 55.800 L40.800 65.700 H44.800 L43.300 74.200 L51.200 63.900 H47.200 Z" fill="#0f1116"/></svg>
<div class="t m" style="top:66.50px;font-size:28px;color:#ffffff;font-weight:700;letter-spacing:1.143px;left:76.30px;-webkit-text-stroke:0.4px #fff;">HyperDX</div>
<svg style="position:absolute;left:388.00px;top:50.00px;color:#a9abb8;" width="30.00" height="30.00" viewBox="0 0 16 16" fill="currentColor" preserveAspectRatio="none"><path d="M0 3a2 2 0 0 1 2-2h12a2 2 0 0 1 2 2v10a2 2 0 0 1-2 2H2a2 2 0 0 1-2-2zm5-1v12h9a1 1 0 0 0 1-1V3a1 1 0 0 0-1-1zM4 2H2a1 1 0 0 0-1 1v10a1 1 0 0 0 1 1h2z"/></svg>
<svg style="position:absolute;left:32.00px;top:165.00px;color:#a9b3c9;" width="28.00" height="28.00" viewBox="0 0 16 16" fill="currentColor" preserveAspectRatio="none"><path d="M3.5 3a.5.5 0 0 0 0 1h5a.5.5 0 0 0 0-1zm0 3a.5.5 0 0 0 0 1h5a.5.5 0 0 0 0-1zM3 9.500a.5.5 0 0 1 .5-.5h5a.5.5 0 0 1 0 1h-5a.5.5 0 0 1-.5-.5m.5 2.5a.5.5 0 0 0 0 1h5a.5.5 0 0 0 0-1z" transform="translate(4 0)"/><path d="M0 2a2 2 0 0 1 2-2h12a2 2 0 0 1 2 2v12a2 2 0 0 1-2 2H2a2 2 0 0 1-2-2zm4-1H2a1 1 0 0 0-1 1v12a1 1 0 0 0 1 1h2zm1 0v14h9a1 1 0 0 0 1-1V2a1 1 0 0 0-1-1z"/></svg>
<div class="t s" style="top:179.50px;font-size:29.5px;color:#62f8c6;font-weight:700;letter-spacing:0.629px;left:85.41px;">Search</div>
<svg style="position:absolute;left:393.70px;top:167.00px;color:#ffffff;" width="24.60" height="24.60" viewBox="0 0 16 16" fill="currentColor" preserveAspectRatio="none"><path fill-rule="evenodd" d="M7.646 4.646a.5.5 0 0 1 .708 0l6 6a.5.5 0 0 1-.708.708L8 5.707l-5.646 5.647a.5.5 0 0 1-.708-.708z"/></svg>
<div style="position:absolute;left:2.00px;top:213.00px;width:458.00px;height:2.00px;box-sizing:border-box;background:#23252c;"></div>
<div style="position:absolute;left:32.00px;top:239.00px;width:396.00px;height:56.00px;box-sizing:border-box;background:#2c2d33;border:2px solid #76778a;border-radius:30px;"></div>
<svg style="position:absolute;left:53.00px;top:255.00px;color:#8e9ab5;" width="24.00" height="24.00" viewBox="0 0 16 16" fill="currentColor" preserveAspectRatio="none"><path d="M11.742 10.344a6.5 6.5 0 1 0-1.397 1.398h-.001q.044.06.098.115l3.85 3.85a1 1 0 0 0 1.415-1.414l-3.85-3.85a1 1 0 0 0-.115-.1zM12 6.5a5.5 5.5 0 1 1-11 0 5.5 5.5 0 0 1 11 0"/></svg>
<div class="t m" style="top:268.00px;font-size:24px;color:#5d6068;letter-spacing:-0.049px;left:90.50px;">Saved Searches</div>
<div style="position:absolute;left:357.00px;top:252.25px;width:50.00px;height:29.50px;box-sizing:border-box;background:#24252b;border-radius:8px;"></div>
<div class="t s" style="top:269.00px;font-size:21.5px;color:#8795b3;letter-spacing:0.500px;left:382.00px;transform:translateX(-50%);font-family:'DejaVu Sans','Liberation Sans',sans-serif;">⌘K</div>
<div class="t s" style="top:337.00px;font-size:25px;color:#8796b4;letter-spacing:1.470px;left:64.50px;-webkit-text-stroke:0.25px #8796b4;">No saved searches</div>
<svg style="position:absolute;left:32.00px;top:390.00px;color:#a9b3c9;" width="28.00" height="28.00" viewBox="0 0 16 16" fill="currentColor" preserveAspectRatio="none"><path fill-rule="evenodd" d="M0 0h1v15h15v1H0zm14.817 3.113a.5.5 0 0 1 .07.704l-4.5 5.5a.5.5 0 0 1-.74.037L7.06 6.767l-3.656 5.027a.5.5 0 0 1-.808-.588l4-5.5a.5.5 0 0 1 .758-.06l2.609 2.61 4.15-5.073a.5.5 0 0 1 .704-.07"/></svg>
<div class="t s" style="top:404.50px;font-size:29.5px;color:#e3e4e8;letter-spacing:1.321px;left:86.91px;-webkit-text-stroke:0.35px #e3e4e8;">Chart Explorer</div>
<svg style="position:absolute;left:32.00px;top:456.00px;color:#a9b3c9;" width="28.00" height="28.00" viewBox="0 0 16 16" fill="currentColor" preserveAspectRatio="none"><path d="M8 16a2 2 0 0 0 2-2H6a2 2 0 0 0 2 2M8 1.918l-.797.161A4 4 0 0 0 4 6c0 .628-.134 2.197-.459 3.742-.16.767-.376 1.566-.663 2.258h10.244c-.287-.692-.502-1.49-.663-2.258C12.134 8.197 12 6.628 12 6a4 4 0 0 0-3.203-3.92zM14.22 12c.223.447.481.801.78 1H1c.299-.199.557-.553.78-1C2.68 10.2 3 6.88 3 6c0-2.42 1.72-4.44 4.005-4.901a1 1 0 1 1 1.99 0A5 5 0 0 1 13 6c0 .88.32 4.2 1.22 6"/></svg>
<div class="t s" style="top:470.50px;font-size:29.5px;color:#e3e4e8;letter-spacing:1.376px;left:86.91px;-webkit-text-stroke:0.35px #e3e4e8;">Alerts</div>
<svg style="position:absolute;left:32.00px;top:522.00px;color:#a9b3c9;" width="28.00" height="28.00" viewBox="0 0 16 16" fill="currentColor" preserveAspectRatio="none"><path d="M13.5 3a.5.5 0 0 1 .5.5V11H2V3.5a.5.5 0 0 1 .5-.5zm-11-1A1.5 1.5 0 0 0 1 3.5V12h14V3.5A1.5 1.5 0 0 0 13.5 2zM0 12.5h16a1.5 1.5 0 0 1-1.5 1.5h-13A1.5 1.5 0 0 1 0 12.5"/></svg>
<div class="t s" style="top:536.50px;font-size:29.5px;color:#e3e4e8;letter-spacing:1.223px;left:86.91px;-webkit-text-stroke:0.35px #e3e4e8;">Client Sessions</div>
<svg style="position:absolute;left:32.00px;top:589.50px;color:#a9b3c9;" width="28.00" height="28.00" viewBox="0 0 16 16" fill="currentColor" preserveAspectRatio="none"><path d="M6 1H1v14h5zm9 0h-5v5h5zm0 9v5h-5v-5zM0 1a1 1 0 0 1 1-1h5a1 1 0 0 1 1 1v14a1 1 0 0 1-1 1H1a1 1 0 0 1-1-1zm9 0a1 1 0 0 1 1-1h5a1 1 0 0 1 1 1v5a1 1 0 0 1-1 1h-5a1 1 0 0 1-1-1zm1 8a1 1 0 0 0-1 1v5a1 1 0 0 0 1 1h5a1 1 0 0 0 1-1v-5a1 1 0 0 0-1-1z"/></svg>
<div class="t s" style="top:603.50px;font-size:29.5px;color:#e3e4e8;letter-spacing:1.210px;left:86.91px;-webkit-text-stroke:0.35px #e3e4e8;">Dashboards</div>
<svg style="position:absolute;left:393.70px;top:590.50px;color:#ffffff;" width="24.60" height="24.60" viewBox="0 0 16 16" fill="currentColor" preserveAspectRatio="none"><path fill-rule="evenodd" d="M7.646 4.646a.5.5 0 0 1 .708 0l6 6a.5.5 0 0 1-.708.708L8 5.707l-5.646 5.647a.5.5 0 0 1-.708-.708z"/></svg>
<div style="position:absolute;left:2.00px;top:637.00px;width:458.00px;height:2.00px;box-sizing:border-box;background:#23252c;"></div>
<div class="t s" style="top:685.50px;font-size:24px;color:#e3e4e8;left:59.20px;">+</div>
<div class="t s" style="top:683.50px;font-size:27.5px;color:#e3e4e8;letter-spacing:-0.164px;left:91.45px;-webkit-text-stroke:0.35px #e3e4e8;">Create Dashboard</div>
<div style="position:absolute;left:32.00px;top:735.00px;width:396.00px;height:56.00px;box-sizing:border-box;background:#2c2d33;border:2px solid #76778a;border-radius:30px;"></div>
<svg style="position:absolute;left:53.00px;top:751.00px;color:#8e9ab5;" width="24.00" height="24.00" viewBox="0 0 16 16" fill="currentColor" preserveAspectRatio="none"><path d="M11.742 10.344a6.5 6.5 0 1 0-1.397 1.398h-.001q.044.06.098.115l3.85 3.85a1 1 0 0 0 1.415-1.414l-3.85-3.85a1 1 0 0 0-.115-.1zM12 6.5a5.5 5.5 0 1 1-11 0 5.5 5.5 0 0 1 11 0"/></svg>
<div class="t m" style="top:764.00px;font-size:24px;color:#5d6068;letter-spacing:-0.049px;left:90.50px;">Saved Dashboards</div>
<div style="position:absolute;left:357.00px;top:748.25px;width:50.00px;height:29.50px;box-sizing:border-box;background:#24252b;border-radius:8px;"></div>
<div class="t s" style="top:765.00px;font-size:21.5px;color:#8795b3;letter-spacing:0.500px;left:382.00px;transform:translateX(-50%);font-family:'DejaVu Sans','Liberation Sans',sans-serif;">⌘K</div>
<div class="t s" style="top:833.00px;font-size:25px;color:#8796b4;letter-spacing:1.528px;left:64.50px;-webkit-text-stroke:0.25px #8796b4;">No saved dashboards</div>
<svg style="position:absolute;left:64.20px;top:873.80px;color:#8796b4;" width="21.60" height="21.60" viewBox="0 0 16 16" fill="currentColor" preserveAspectRatio="none"><path fill-rule="evenodd" d="M1.646 4.646a.5.5 0 0 1 .708 0L8 10.293l5.646-5.647a.5.5 0 0 1 .708.708l-6 6a.5.5 0 0 1-.708 0l-6-6a.5.5 0 0 1 0-.708"/></svg>
<div class="t s" style="top:883.50px;font-size:22.5px;color:#8796b4;letter-spacing:0.553px;left:100.30px;-webkit-text-stroke:0.25px #8796b4;">PRESETS</div>
<div class="t s" style="top:931.50px;font-size:27.5px;color:#dfe2ea;letter-spacing:1.252px;left:64.45px;-webkit-text-stroke:0.3px #dfe2ea;">ClickHouse</div>
<div class="t s" style="top:978.50px;font-size:27.5px;color:#dfe2ea;letter-spacing:1.268px;left:64.45px;-webkit-text-stroke:0.3px #dfe2ea;">Services</div>
<div class="t s" style="top:1025.50px;font-size:27.5px;color:#dfe2ea;letter-spacing:1.219px;left:64.45px;-webkit-text-stroke:0.3px #dfe2ea;">Kubernetes</div>
<svg style="position:absolute;left:32.00px;top:1112.50px;color:#a9b3c9;" width="28.00" height="28.00" viewBox="0 0 16 16" fill="currentColor" preserveAspectRatio="none"><path d="M8 4.754a3.246 3.246 0 1 0 0 6.492 3.246 3.246 0 0 0 0-6.492M5.754 8a2.246 2.246 0 1 1 4.492 0 2.246 2.246 0 0 1-4.492 0"/><path d="M9.796 1.343c-.527-1.79-3.065-1.79-3.592 0l-.094.319a.873.873 0 0 1-1.255.52l-.292-.16c-1.64-.892-3.433.902-2.54 2.541l.159.292a.873.873 0 0 1-.52 1.255l-.319.094c-1.79.527-1.79 3.065 0 3.592l.319.094a.873.873 0 0 1 .52 1.255l-.16.292c-.892 1.64.901 3.434 2.541 2.54l.292-.159a.873.873 0 0 1 1.255.52l.094.319c.527 1.79 3.065 1.79 3.592 0l.094-.319a.873.873 0 0 1 1.255-.52l.292.16c1.64.893 3.434-.902 2.54-2.541l-.159-.292a.873.873 0 0 1 .52-1.255l.319-.094c1.79-.527 1.79-3.065 0-3.592l-.319-.094a.873.873 0 0 1-.52-1.255l.16-.292c.893-1.64-.902-3.433-2.541-2.54l-.292.159a.873.873 0 0 1-1.255-.52zm-2.633.283c.246-.835 1.428-.835 1.674 0l.094.319a1.873 1.873 0 0 0 2.693 1.115l.291-.16c.764-.415 1.6.42 1.184 1.185l-.159.292a1.873 1.873 0 0 0 1.116 2.692l.318.094c.835.246.835 1.428 0 1.674l-.319.094a1.873 1.873 0 0 0-1.115 2.693l.16.291c.415.764-.42 1.6-1.185 1.184l-.291-.159a1.873 1.873 0 0 0-2.693 1.116l-.094.318c-.246.835-1.428.835-1.674 0l-.094-.319a1.873 1.873 0 0 0-2.692-1.115l-.292.16c-.764.415-1.6-.42-1.184-1.185l.159-.291A1.873 1.873 0 0 0 1.945 8.93l-.319-.094c-.835-.246-.835-1.428 0-1.674l.319-.094A1.873 1.873 0 0 0 3.06 4.377l-.16-.292c-.415-.764.42-1.6 1.185-1.184l.292.159a1.873 1.873 0 0 0 2.692-1.115z"/></svg>
<div class="t s" style="top:1126.50px;font-size:29.5px;color:#e3e4e8;letter-spacing:1.384px;left:86.91px;-webkit-text-stroke:0.35px #e3e4e8;">Team Settings</div>
<div style="position:absolute;left:32.00px;top:1207.50px;width:396.00px;height:692.50px;box-sizing:border-box;background:#121316;border:2px solid #2a2b31;border-radius:18px;"></div>
<div class="t s" style="top:1251.00px;font-size:27px;color:#b4b5c1;font-weight:700;letter-spacing:1.185px;left:53.96px;">Get Started</div>
<div style="position:absolute;left:233.75px;top:1235.00px;width:60.00px;height:32.00px;box-sizing:border-box;background:#14382f;border-radius:16px;"></div>
<div class="t s" style="top:1251.50px;font-size:18.5px;color:#4fe8b0;font-weight:700;left:263.75px;transform:translateX(-50%);">3/3</div>
<svg style="position:absolute;left:372.00px;top:1238.70px;color:#8796b4;" width="24.60" height="24.60" viewBox="0 0 16 16" fill="currentColor" preserveAspectRatio="none"><path fill-rule="evenodd" d="M7.646 4.646a.5.5 0 0 1 .708 0l6 6a.5.5 0 0 1-.708.708L8 5.707l-5.646 5.647a.5.5 0 0 1-.708-.708z"/></svg>
<svg style="position:absolute;left:52px;top:1342px" width="44" height="44" viewBox="0 0 44 44"><circle cx="22" cy="22" r="19" fill="none" stroke="#2be0a6" stroke-width="2.400"/><path d="M16.600 22.600 L20.300 26.200 L27.200 18.200" fill="none" stroke="#2be0a6" stroke-width="2.200"/></svg>
<div class="t s" style="top:1312.00px;font-size:27px;color:#71727e;letter-spacing:1.924px;left:118.21px;text-decoration:line-through;text-decoration-thickness:1.6px;-webkit-text-stroke:0.6px #71727e;">Connect to</div>
<div class="t s" style="top:1350.00px;font-size:27px;color:#71727e;letter-spacing:1.828px;left:118.21px;text-decoration:line-through;text-decoration-thickness:1.6px;-webkit-text-stroke:0.6px #71727e;">ClickHouse</div>
<div class="t s" style="top:1385.00px;font-size:25px;color:#8b8c99;letter-spacing:1.541px;left:118.25px;">Set up your database</div>
<div class="t s" style="top:1419.00px;font-size:25px;color:#8b8c99;letter-spacing:1.806px;left:118.25px;">connection</div>
<svg style="position:absolute;left:52px;top:1486px" width="44" height="44" viewBox="0 0 44 44"><circle cx="22" cy="22" r="19" fill="none" stroke="#2be0a6" stroke-width="2.400"/><path d="M16.600 22.600 L20.300 26.200 L27.200 18.200" fill="none" stroke="#2be0a6" stroke-width="2.200"/></svg>
<div class="t s" style="top:1475.00px;font-size:27px;color:#71727e;letter-spacing:1.590px;left:118.21px;text-decoration:line-through;text-decoration-thickness:1.6px;-webkit-text-stroke:0.6px #71727e;">Create Data Sources</div>
<div class="t s" style="top:1510.00px;font-size:25px;color:#8b8c99;letter-spacing:1.599px;left:118.25px;">Configure where your</div>
<div class="t s" style="top:1544.00px;font-size:25px;color:#8b8c99;letter-spacing:1.654px;left:118.25px;">data comes from</div>
<svg style="position:absolute;left:52px;top:1611px" width="44" height="44" viewBox="0 0 44 44"><circle cx="22" cy="22" r="19" fill="none" stroke="#2be0a6" stroke-width="2.400"/><path d="M16.600 22.600 L20.300 26.200 L27.200 18.200" fill="none" stroke="#2be0a6" stroke-width="2.200"/></svg>
<div class="t s" style="top:1600.00px;font-size:27px;color:#71727e;letter-spacing:1.688px;left:118.21px;text-decoration:line-through;text-decoration-thickness:1.6px;-webkit-text-stroke:0.6px #71727e;">Add Data</div>
<div class="t s" style="top:1635.00px;font-size:25px;color:#8b8c99;letter-spacing:1.575px;left:118.25px;">Start sending logs,</div>
<div class="t s" style="top:1669.00px;font-size:25px;color:#8b8c99;letter-spacing:1.683px;left:118.25px;">metrics, or traces</div>
<div class="t s" style="top:1763.00px;font-size:26px;color:#138a66;font-weight:700;letter-spacing:1.200px;left:112.00px;">Great job! You're</div>
<svg style="position:absolute;left:72px;top:1748px" width="30" height="14" viewBox="0 0 30 14"><circle cx="5" cy="6" r="1.500" fill="#2a3f8f"/><circle cx="12" cy="9" r="1.800" fill="#b8860b"/><circle cx="17" cy="5" r="1.500" fill="#8f2a3a"/><circle cx="24" cy="7" r="1.600" fill="#a02050"/></svg>
<div style="position:absolute;left:2.00px;top:1700.00px;width:457.00px;height:156.00px;box-sizing:border-box;background:linear-gradient(to bottom, rgba(15,17,22,0), rgba(15,17,22,.75) 60%);"></div>
<div style="position:absolute;left:24.00px;top:1686.00px;width:56.00px;height:56.00px;box-sizing:border-box;background:#52536a;border:2px solid #3b3c4c;border-radius:50%;box-shadow:0 2px 6px rgba(0,0,0,.4);"></div>
<div class="t s" style="top:1714.50px;font-size:33px;color:#e4e4ee;left:52.00px;transform:translateX(-50%);">?</div>
<div style="position:absolute;left:24.25px;top:1758.25px;width:412.00px;height:73.75px;box-sizing:border-box;background:#515269;border-radius:16px;"></div>
<div style="position:absolute;left:40.00px;top:1769.00px;width:52.00px;height:52.00px;box-sizing:border-box;background:#496b72;border-radius:50%;"></div>
<div class="t s" style="top:1794.50px;font-size:22.5px;color:#62f6c6;font-weight:700;left:65.50px;transform:translateX(-50%);">D</div>
<div class="t s" style="top:1780.00px;font-size:23.5px;color:#b7b7c8;font-weight:700;letter-spacing:2.088px;left:112.03px;">dale@clickhouse.com</div>
<div class="t s" style="top:1807.00px;font-size:23.5px;color:#8f909a;letter-spacing:1.406px;left:112.03px;">dale@clickhouse.com's</div>
<svg style="position:absolute;left:421.00px;top:1785.00px;color:#7986ad;" width="20.00" height="20.00" viewBox="0 0 16 16" fill="currentColor" preserveAspectRatio="none"><path fill-rule="evenodd" d="M4.646 1.646a.5.5 0 0 1 .708 0l6 6a.5.5 0 0 1 0 .708l-6 6a.5.5 0 0 1-.708-.708L10.293 8 4.646 2.354a.5.5 0 0 1 0-.708"/></svg>
<div style="position:absolute;left:460.00px;top:0.00px;width:2.00px;height:1856.00px;box-sizing:border-box;background:#25272e;"></div>
<svg style="position:absolute;left:0;top:0" width="3600" height="1856" viewBox="0 0 3600 1856"><path d="M0 1820 H30 V1856 H0 Z M1 1820 V1836 A19 19 0 0 0 20 1855 H30 V1820 Z" fill="#48494d" fill-rule="evenodd"/><path d="M3570 1820 H3600 V1856 H3570 Z M3599 1820 V1836 A19 19 0 0 1 3580 1855 H3570 V1820 Z" fill="#0a0a0a" fill-rule="evenodd"/><path d="M1 0 V1836 A19 19 0 0 0 20 1855 H3580 A19 19 0 0 0 3599 1836 V0" fill="none" stroke="#47484c" stroke-width="2"/><path d="M0 0.500 H3600" stroke="#3a3b40" stroke-width="1"/></svg>
<script>(function(){var w=window.innerWidth;if(w&&Math.abs(w-3600)>2){document.documentElement.style.zoom=(w/3600);}})();</script>
</body></html>
